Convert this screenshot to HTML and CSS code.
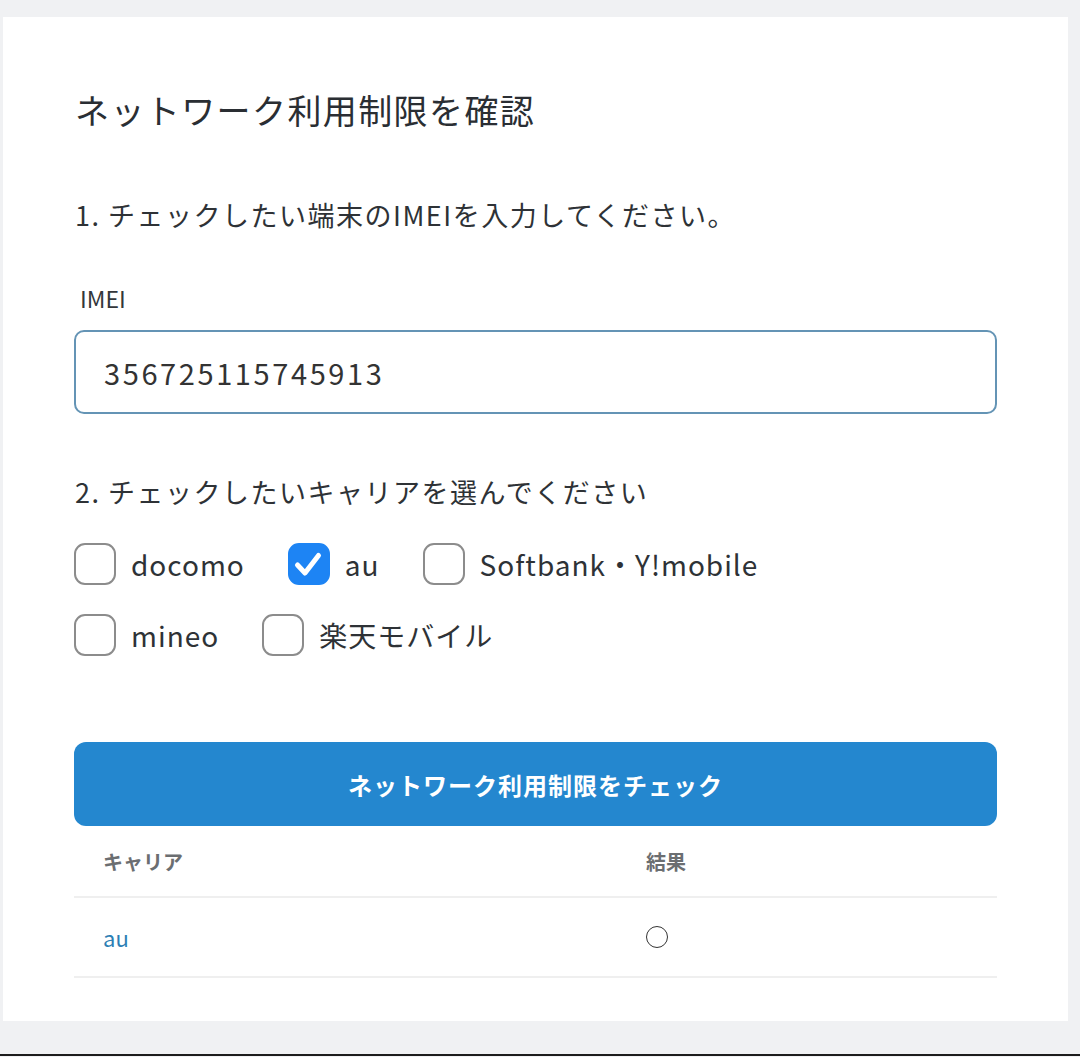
FILE: index.html
```html
<!DOCTYPE html>
<html lang="ja">
<head>
<meta charset="utf-8">
<title>ネットワーク利用制限を確認</title>
<link rel="stylesheet" href="styles.css">
</head>
<body>
<main class="card">
  <h1 class="title">ネットワーク利用制限を確認</h1>
  <p class="step step-1">1. チェックしたい端末のIMEIを入力してください。</p>
  <label class="field-label" for="imei">IMEI</label>
  <div class="input">356725115745913</div>
  <p class="step step-2">2. チェックしたいキャリアを選んでください</p>
  <div class="carriers">
    <div class="carrier-row">
      <span class="opt"><span class="box"></span><span class="opt-text">docomo</span></span>
      <span class="opt"><span class="box checked"><svg viewBox="0 0 42 42" width="42" height="42"><path d="M10.5 22 L18 30 L31.5 12.5" fill="none" stroke="#fff" stroke-width="5" stroke-linecap="round" stroke-linejoin="round"/></svg></span><span class="opt-text">au</span></span>
      <span class="opt"><span class="box"></span><span class="opt-text">Softbank・Y!mobile</span></span>
    </div>
    <div class="carrier-row">
      <span class="opt"><span class="box"></span><span class="opt-text">mineo</span></span>
      <span class="opt"><span class="box"></span><span class="opt-text">楽天モバイル</span></span>
    </div>
  </div>
  <button class="submit" type="button">ネットワーク利用制限をチェック</button>
  <div class="table">
    <div class="row head">
      <div class="cell">キャリア</div>
      <div class="cell">結果</div>
    </div>
    <div class="row">
      <div class="cell link">au</div>
      <div class="cell result"><span class="circle"></span></div>
    </div>
  </div>
</main>
</body>
</html>
```

FILE: styles.css
```css
* { box-sizing: border-box; }

html, body { margin: 0; }

body {
  background: #f0f1f3;
  padding: 17px 12px 33px 3px;
  border-bottom: 2px solid #1c1c1c;
  font-family: "Noto Sans CJK JP", "Noto Sans", sans-serif;
  color: #2b2f33;
}

.card {
  background: #fff;
  padding: 69px 71px 43px 71px;
  display: flex;
  flex-direction: column;
}

.title {
  margin: 0;
  font-size: 34px;
  line-height: 48px;
  font-weight: 400;
  letter-spacing: 1.4px;
  color: #2a2e33;
  padding-left: 1px;
}

.step {
  margin: 0;
  font-size: 27px;
  line-height: 40px;
  font-weight: 400;
  color: #2e3236;
  padding-left: 1px;
  letter-spacing: 1.5px;
}

.step-1 { margin-top: 61px; }
.step-2 { margin-top: 58px; }

.field-label {
  margin-top: 47px;
  font-size: 23px;
  line-height: 32px;
  padding-left: 6px;
  color: #33373b;
}

.input {
  margin-top: 16px;
  height: 84px;
  border: 2px solid #6494b5;
  border-radius: 10px;
  padding-left: 28px;
  display: flex;
  align-items: center;
  font-size: 29px;
  color: #333;
  letter-spacing: 2.6px;
}

.carriers {
  margin-top: 31px;
  display: flex;
  flex-direction: column;
  gap: 29px;
}

.carrier-row {
  display: flex;
  gap: 43px;
  align-items: center;
}

.opt {
  display: flex;
  align-items: center;
  gap: 15px;
  height: 42px;
}

.box {
  width: 42px;
  height: 42px;
  border: 2.5px solid #8c8c8c;
  border-radius: 11px;
  display: block;
  flex: none;
}

.box.checked {
  background: #1d84f4;
  border-color: #1d84f4;
  position: relative;
}

.box.checked svg {
  position: absolute;
  left: -2.5px;
  top: -2.5px;
}

.opt-text {
  font-size: 28px;
  color: #2e3236;
  letter-spacing: 1px;
}

.submit {
  margin-top: 86px;
  height: 84px;
  border: none;
  border-radius: 12px;
  background: #2487cf;
  color: #fff;
  font-family: inherit;
  font-size: 24px;
  font-weight: 700;
  letter-spacing: 1px;
}

.table {
  display: flex;
  flex-direction: column;
}

.row {
  display: grid;
  grid-template-columns: 543px 1fr;
  align-items: center;
  height: 80px;
  border-bottom: 2px solid #efefef;
}

.row.head {
  height: 72px;
}

.cell {
  padding-left: 29px;
  font-size: 22px;
}

.head .cell {
  font-size: 20px;
  font-weight: 700;
  color: #6b6e71;
}

.link {
  color: #2d7fb5;
}

.circle {
  display: block;
  width: 22px;
  height: 22px;
  border: 1.5px solid #333;
  border-radius: 50%;
}
```
